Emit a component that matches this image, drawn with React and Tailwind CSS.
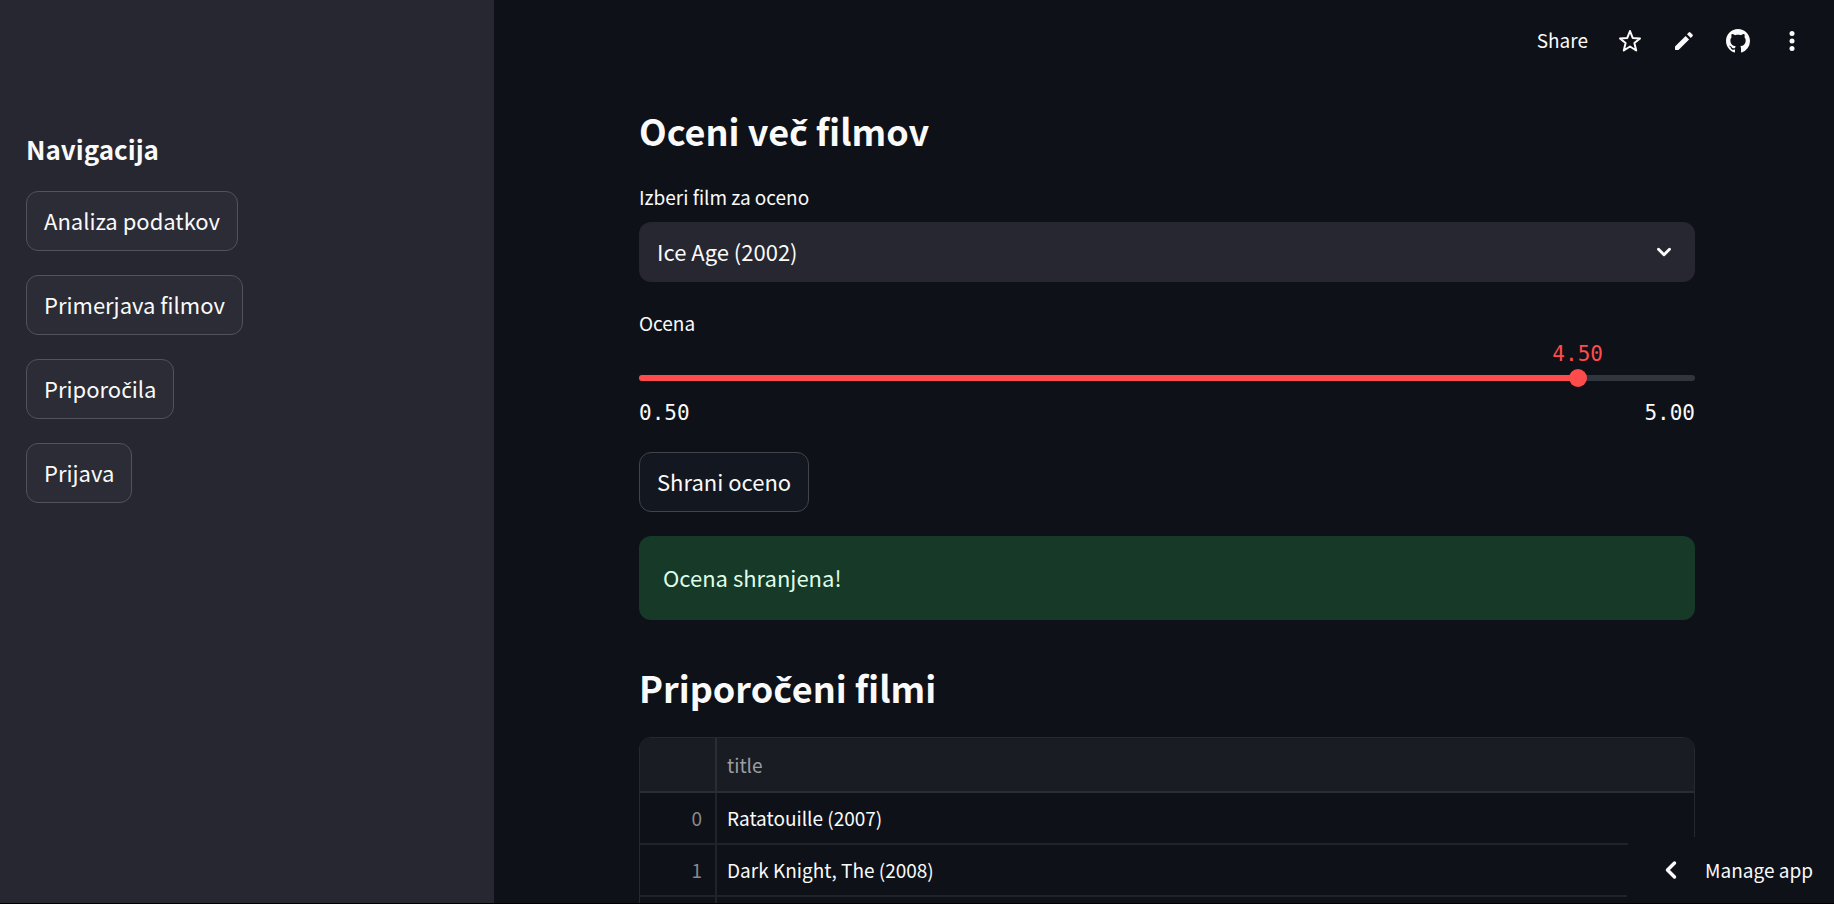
import { useState } from "react";
import { ChevronDown, ChevronLeft } from "lucide-react";

const navItems = ["Analiza podatkov", "Primerjava filmov", "Priporočila", "Prijava"];
const movies = ["Ratatouille (2007)", "Dark Knight, The (2008)"];

const MIN = 0.5;
const MAX = 5;

// The main family has no "č", so that letter is set in Noto Sans.
function Text({ children }) {
  return children.split(/(č)/).map((part, i) =>
    part === "č" ? (
      <span key={i} className="font-['Noto_Sans',sans-serif] leading-none">č</span>
    ) : (
      part
    )
  );
}

function StarIcon() {
  return (
    <svg viewBox="0 0 24 24" className="size-6" fill="none" stroke="currentColor" strokeWidth="2" strokeLinejoin="round">
      <path d="M12 2 L14.700 8.900 L22 9.400 L16.400 14.100 L18.200 21.500 L12 17.500 L5.800 21.500 L7.600 14.100 L2 9.400 L9.300 8.900 Z" />
    </svg>
  );
}

function PencilIcon() {
  return (
    <svg viewBox="0 0 24 24" className="size-6" fill="currentColor">
      <path d="M3 17.500V20.500c0 .3.200.5.500.5H6.500L17.100 10.400 13.600 6.900zM20.500 5.600L18.400 3.500a1.200 1.200 0 0 0-1.700 0L15 5.200l3.800 3.800 1.700-1.700a1.200 1.200 0 0 0 0-1.700z" />
    </svg>
  );
}

function GithubIcon() {
  return (
    <svg viewBox="0 0 16 16" className="size-6" fill="currentColor">
      <path d="M8 0C3.58 0 0 3.58 0 8c0 3.54 2.29 6.53 5.47 7.59.4.07.55-.17.55-.38 0-.19-.01-.82-.01-1.49-2.01.37-2.53-.49-2.69-.94-.09-.23-.48-.94-.82-1.13-.28-.15-.68-.52-.01-.53.63-.01 1.08.58 1.23.82.72 1.21 1.87.87 2.33.66.07-.52.28-.87.51-1.07-1.78-.2-3.64-.89-3.64-3.95 0-.87.31-1.59.82-2.15-.08-.2-.36-1.02.08-2.12 0 0 .67-.21 2.2.82.64-.18 1.32-.27 2-.27.68 0 1.36.09 2 .27 1.53-1.04 2.2-.82 2.2-.82.44 1.1.16 1.92.08 2.12.51.56.82 1.27.82 2.15 0 3.07-1.87 3.75-3.65 3.95.29.25.54.73.54 1.48 0 1.07-.01 1.93-.01 2.2 0 .21.15.46.55.38A8.013 8.013 0 0 0 16 8c0-4.42-3.58-8-8-8z" />
    </svg>
  );
}

function DotsIcon() {
  return (
    <svg viewBox="0 0 24 24" className="size-6" fill="currentColor">
      <circle cx="12" cy="4.500" r="2.500" />
      <circle cx="12" cy="12" r="2.500" />
      <circle cx="12" cy="19.500" r="2.500" />
    </svg>
  );
}

function RatingSlider() {
  const [value, setValue] = useState(4.5);
  const percent = ((value - MIN) / (MAX - MIN)) * 100;
  return (
    <div className="flex flex-col">
      <label htmlFor="rating" className="text-[19px] leading-[30px]">Ocena</label>
      <div className="relative mt-[31px] h-[18px]">
        <div className="flex h-full items-center">
          <div className="h-[6px] w-full overflow-hidden rounded-full bg-[#31353e]">
            <div className="h-full bg-[#ff4b4b]" style={{ width: `${percent}%` }} />
          </div>
        </div>
        <output
          htmlFor="rating"
          className="absolute bottom-[21px] -translate-x-1/2 font-['DejaVu_Sans_Mono',monospace] text-[21px] leading-6 text-[#ff4b4b]"
          style={{ left: `${percent}%` }}
        >
          {value.toFixed(2)}
        </output>
        <input
          id="rating"
          type="range"
          min={MIN}
          max={MAX}
          step="0.5"
          value={value}
          onChange={(e) => setValue(Number(e.target.value))}
          className="absolute inset-y-0 -left-[9px] w-[calc(100%+18px)] appearance-none bg-transparent [&::-webkit-slider-thumb]:size-[18px] [&::-webkit-slider-thumb]:appearance-none [&::-webkit-slider-thumb]:rounded-full [&::-webkit-slider-thumb]:bg-[#ff4b4b]"
        />
      </div>
      <div className="mt-[14px] flex justify-between font-['DejaVu_Sans_Mono',monospace] text-[21px] leading-6">
        <span>0.50</span>
        <span>5.00</span>
      </div>
    </div>
  );
}

export default function App() {
  return (
    <div className="flex h-screen overflow-hidden border-b border-black bg-[#0e1117] font-['Noto_Sans_CJK_JP','Noto_Sans',sans-serif] text-[22px] leading-9 text-[#fafafa]">
      <aside className="flex w-[494px] shrink-0 flex-col items-start bg-[#262730] px-[26px] pt-[131px]">
        <h2 className="text-[26px] leading-9 font-bold">Navigacija</h2>
        <nav aria-label="Navigacija" className="mt-6 flex flex-col items-start gap-6">
          {navItems.map((item) => (
            <button key={item} className="h-[60px] rounded-xl border border-[#51525b] bg-[#2b2c36] px-[17px] pb-[2px]">
              <Text>{item}</Text>
            </button>
          ))}
        </nav>
      </aside>

      <div className="relative flex min-w-0 flex-1 flex-col">
        <header className="flex h-[82px] shrink-0 items-center justify-end gap-[30px] pr-[30px] text-[19px]">
          <button className="pb-[2px]">Share</button>
          <button aria-label="Star"><StarIcon /></button>
          <button aria-label="Edit"><PencilIcon /></button>
          <a href="#github" aria-label="GitHub"><GithubIcon /></a>
          <button aria-label="Menu"><DotsIcon /></button>
        </header>

        <main className="flex-1 overflow-y-auto pr-6 pl-[30px] [scrollbar-width:none]">
          <div className="mx-auto flex max-w-[1056px] flex-col pt-[23px]">
            <h1 className="text-[36px] leading-[50px] font-bold"><Text>Oceni več filmov</Text></h1>

            <label htmlFor="film" className="mt-[27px] text-[19px] leading-[30px]">Izberi film za oceno</label>
            <div className="relative mt-[10px]">
              <select id="film" className="h-[60px] w-full appearance-none rounded-xl bg-[#262730] px-[18px] pb-[2px]">
                <option>Ice Age (2002)</option>
              </select>
              <ChevronDown className="pointer-events-none absolute top-[19px] right-5 size-[22px]" strokeWidth={3.2} />
            </div>

            <div className="mt-[26px]">
              <RatingSlider />
            </div>

            <button className="mt-[27px] h-[60px] self-start rounded-xl border border-[#41444c] bg-[#131720] px-[17px] pb-[2px]">
              Shrani oceno
            </button>

            <div role="status" className="mt-6 rounded-xl bg-[#173928] px-6 pt-[23px] pb-[25px] text-[#dffde9]">Ocena shranjena!</div>

            <h2 className="mt-[42px] text-[36px] leading-[50px] font-bold"><Text>Priporočeni filmi</Text></h2>

            <div className="mt-[25px] overflow-hidden rounded-xl border border-[#262930]">
              <table className="w-full border-collapse text-[19px] leading-6">
                <thead>
                  <tr className="h-[54px] border-b-2 border-[#2a2d34] bg-[#1a1c24] text-[#9c9da1]">
                    <th className="w-[76px] border-r-2 border-[#2a2d34]" aria-label="Index" />
                    <th className="px-[10px] text-left font-normal">title</th>
                  </tr>
                </thead>
                <tbody>
                  {movies.map((movie, i) => (
                    <tr key={movie} className="h-[52px] border-b-2 border-[#202329]">
                      <td className="border-r-2 border-[#202329] pr-[13px] text-right text-[#88898d]">{i}</td>
                      <td className="px-[10px]">{movie}</td>
                    </tr>
                  ))}
                  <tr className="h-[52px]">
                    <td className="border-r-2 border-[#202329]" />
                    <td />
                  </tr>
                </tbody>
              </table>
            </div>
          </div>
        </main>

        <button className="absolute right-0 bottom-0 flex h-[66px] items-center gap-5 rounded-tl-xl bg-[#0e1117] pr-[21px] pl-[30px] text-[19px]">
          <ChevronLeft className="size-7" strokeWidth={3} />
          Manage app
        </button>
      </div>
    </div>
  );
}
